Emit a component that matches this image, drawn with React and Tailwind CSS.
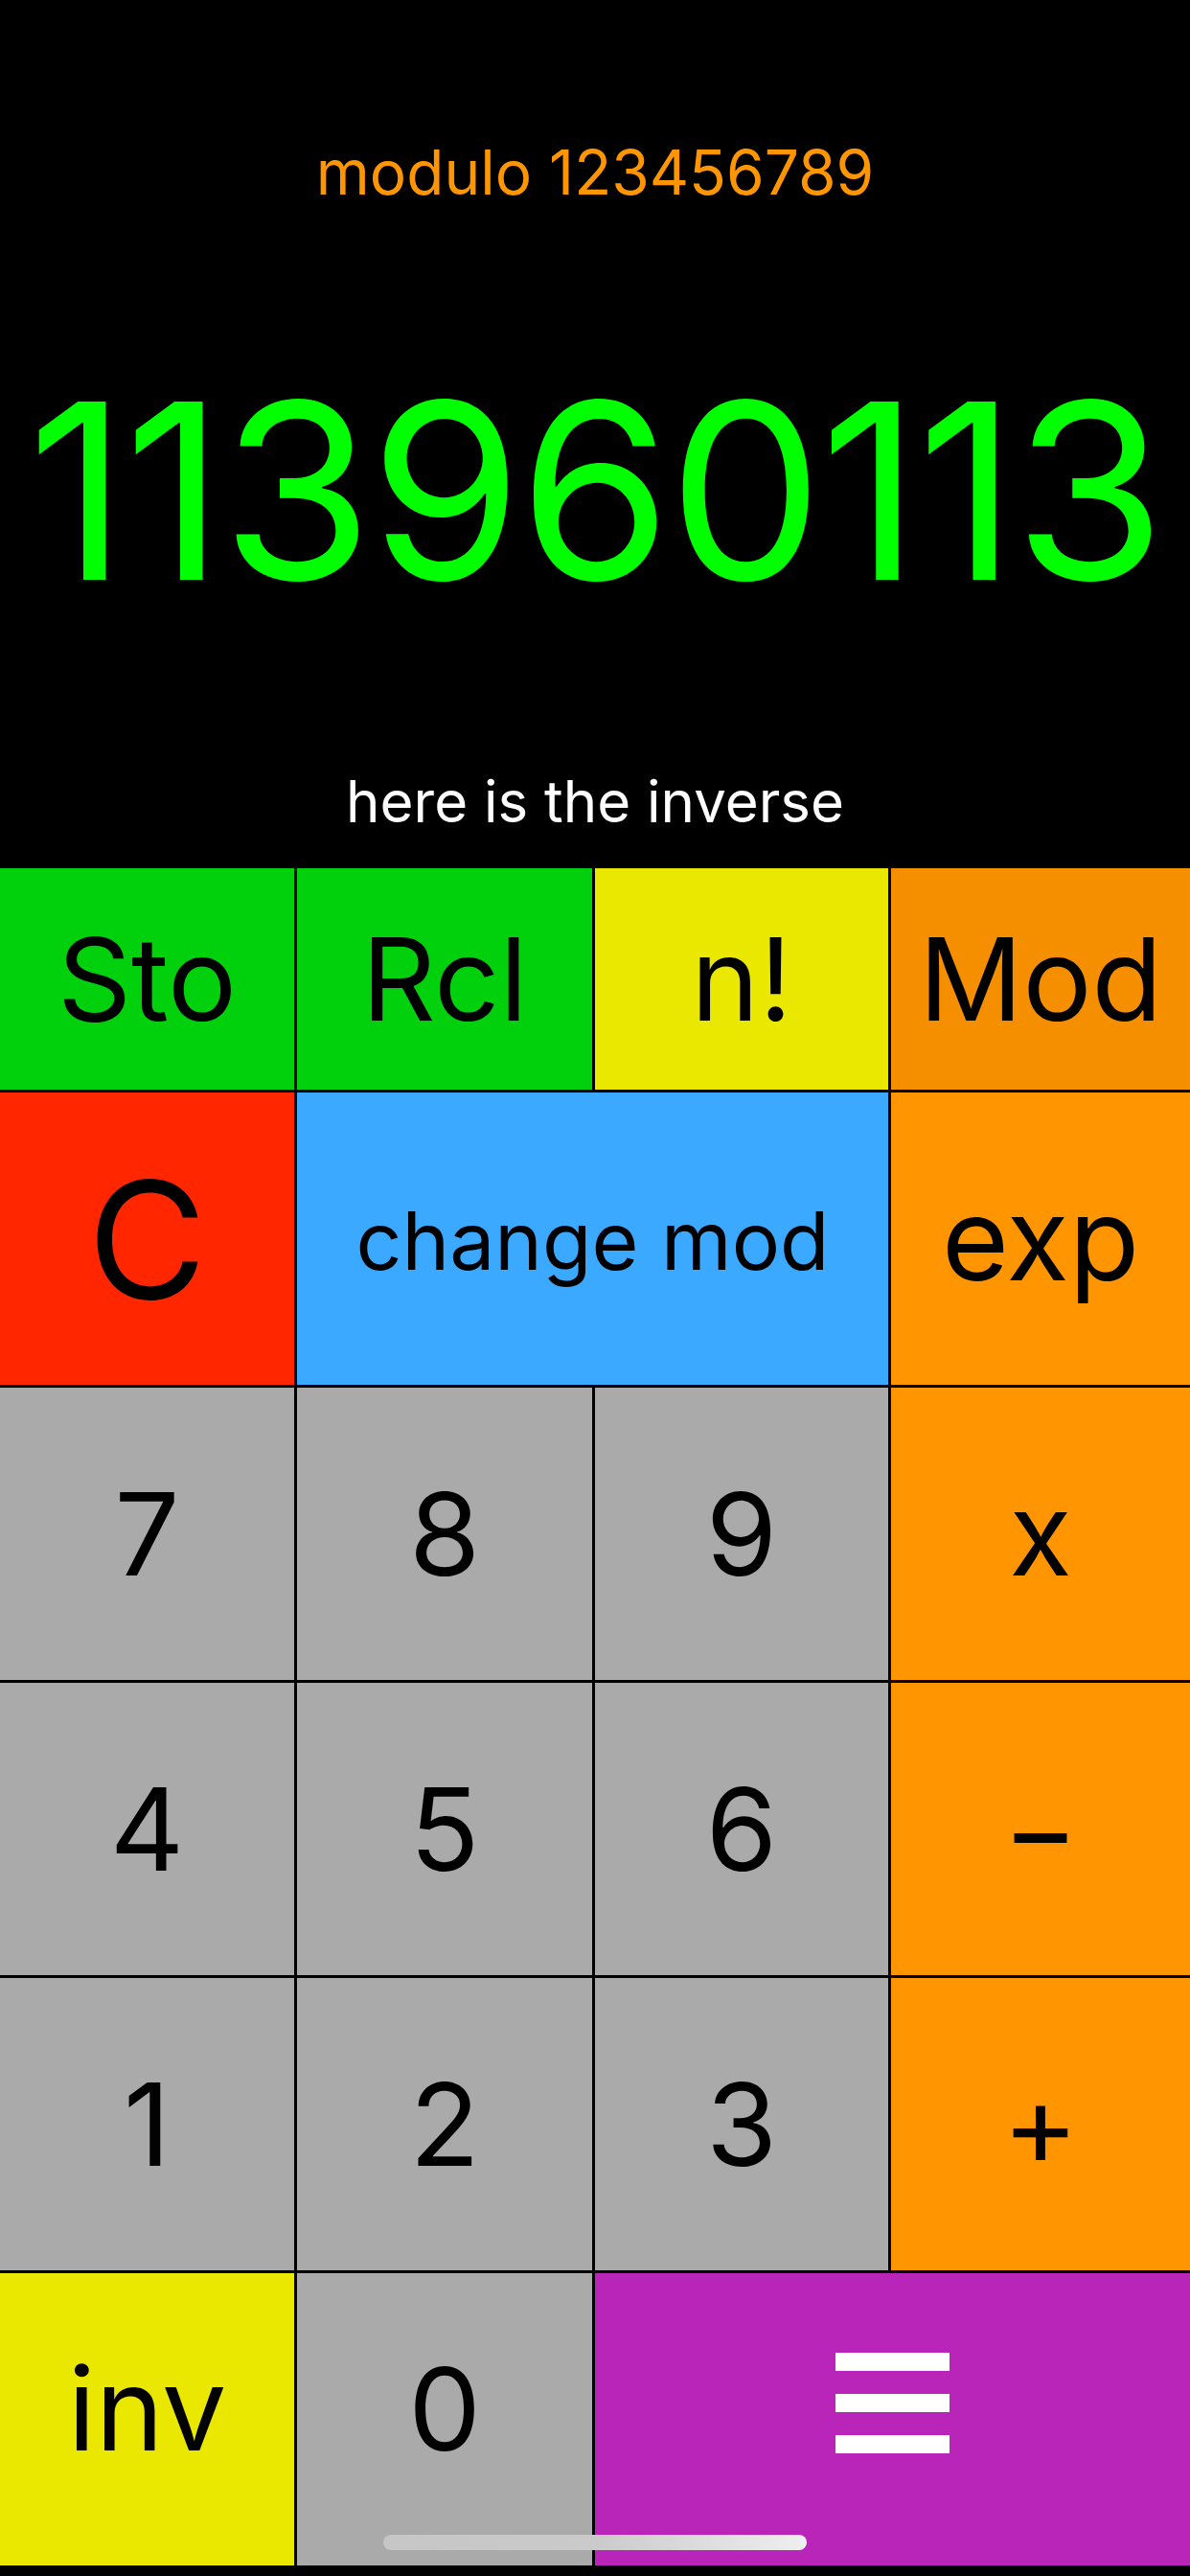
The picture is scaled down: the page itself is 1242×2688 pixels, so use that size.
import React from "react"

const font = { fontFamily: "Inter, 'Liberation Sans', sans-serif" }

function Key({ label, className = "", textClass = "text-[120px]" }) {
  return (
    <button
      type="button"
      className={`flex items-center justify-center text-black leading-none ${textClass} ${className}`}
    >
      {label}
    </button>
  )
}

function EqualsKey() {
  return (
    <button type="button" className="col-span-2 flex items-center justify-center bg-[#b825b8]">
      <span className="mb-[34px] flex flex-col gap-[24px]" aria-label="=">
        <span className="block h-[19px] w-[119px] bg-white" />
        <span className="block h-[19px] w-[119px] bg-white" />
        <span className="block h-[19px] w-[119px] bg-white" />
      </span>
    </button>
  )
}

export default function App() {
  return (
    <div className="relative h-[2688px] w-[1242px] overflow-hidden bg-black" style={font}>
      <div className="flex h-[906px] flex-col items-center">
        <div className="mt-[148px] text-[64px] leading-none text-[#ff9500]">modulo 123456789</div>
        <div className="mt-[172px] text-[256px] leading-none tracking-[-3px] text-[#00ff00]">113960113</div>
        <div className="mt-[166px] text-[60px] leading-none text-white">here is the inverse</div>
      </div>

      <div className="grid grid-cols-[307px_308px_306px_1fr] grid-rows-[231px_repeat(5,305px)] gap-[3px]">
        <Key label="Sto" className="bg-[#00d10c]" />
        <Key label="Rcl" className="bg-[#00d10c]" />
        <Key label="n!" className="bg-[#eae800]" />
        <Key label="Mod" className="bg-[#f68f00]" />

        <Key label="C" className="bg-[#ff2600]" textClass="text-[170px]" />
        <Key label="change mod" className="col-span-2 bg-[#3ba9ff] pt-[4px]" textClass="text-[84px]" />
        <Key label="exp" className="bg-[#ff9500]" />

        <Key label="7" className="bg-[#aaaaaa]" />
        <Key label="8" className="bg-[#aaaaaa]" />
        <Key label="9" className="bg-[#aaaaaa]" />
        <Key label="x" className="bg-[#ff9500]" />

        <Key label="4" className="bg-[#aaaaaa]" />
        <Key label="5" className="bg-[#aaaaaa]" />
        <Key label="6" className="bg-[#aaaaaa]" />
        <Key label="−" className="bg-[#ff9500]" />

        <Key label="1" className="bg-[#aaaaaa]" />
        <Key label="2" className="bg-[#aaaaaa]" />
        <Key label="3" className="bg-[#aaaaaa]" />
        <Key label="+" className="bg-[#ff9500]" />

        <Key label="inv" className="bg-[#eae800] pb-[22px]" />
        <Key label="0" className="bg-[#aaaaaa] pb-[22px]" />
        <EqualsKey />
      </div>

      {/* home indicator */}
      <div className="absolute bottom-[27px] left-[400px] h-[16px] w-[442px] rounded-full bg-gradient-to-r from-[#c6c6c6] via-[#cacaca] to-[#efefef]" />
    </div>
  )
}
